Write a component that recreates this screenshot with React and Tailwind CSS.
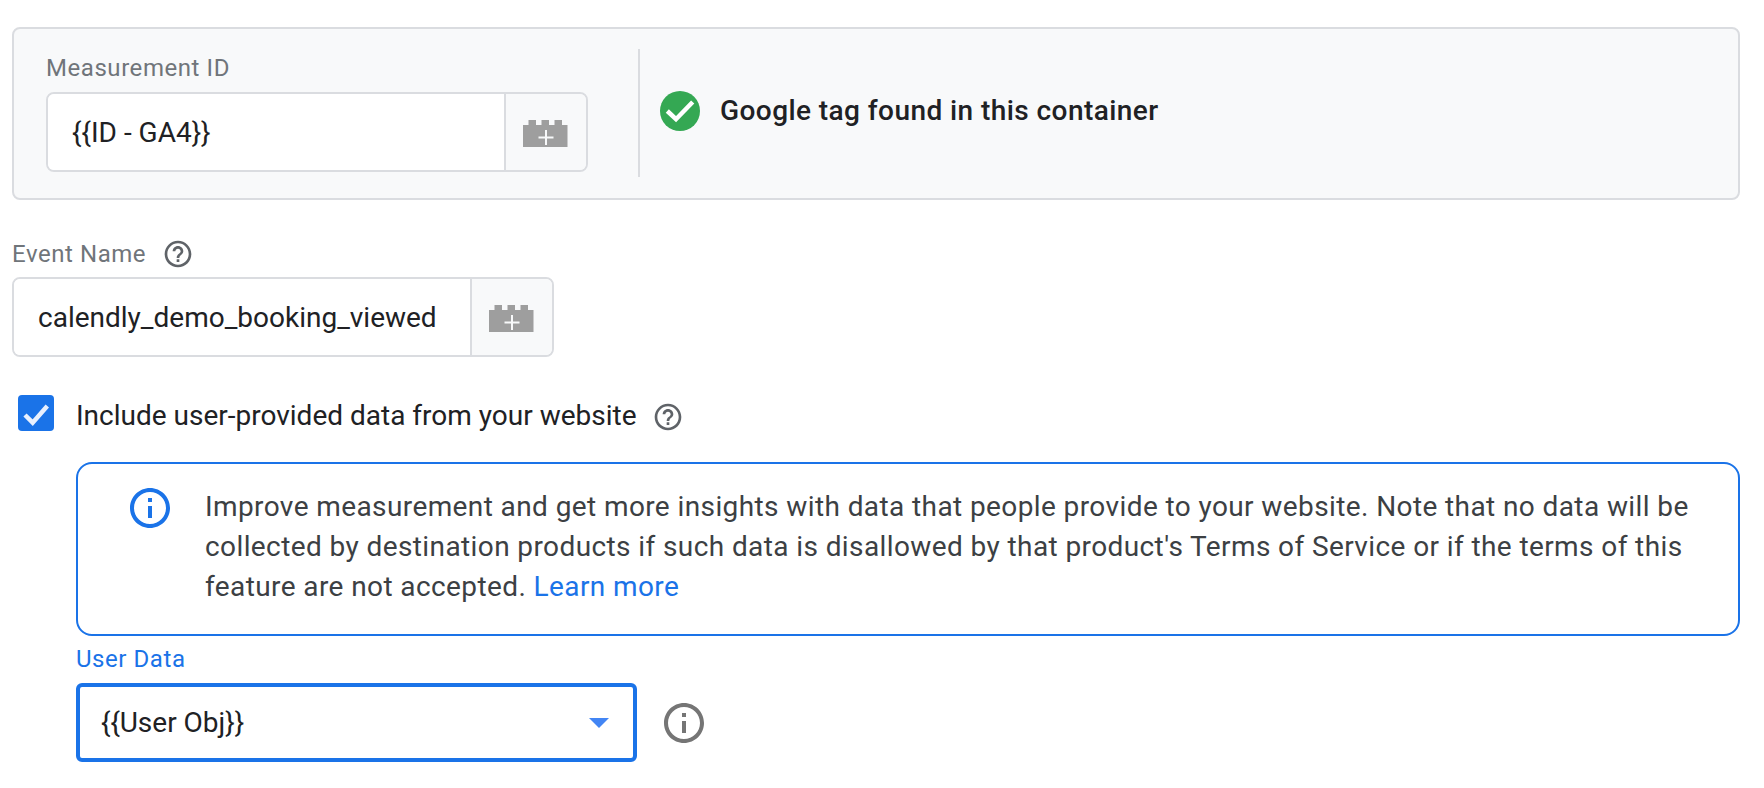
const font = { fontFamily: "Roboto, sans-serif" };

function BrickIcon() {
  return (
    <svg width="46" height="27" viewBox="0 0 46 27" className="mt-[3px] block">
      <path
        fill="#9e9e9e"
        d="M0 5h5.500V0h7.500v5h5.500V0h7.500v5h5.500V0h7.500v5h5.500v22H0z"
      />
      <path stroke="#f8f9fa" strokeWidth="2" d="M23 10v15M15.500 17.500h15" />
    </svg>
  );
}

function HelpIcon({ size = 32 }) {
  return (
    <svg width={size} height={size} viewBox="0 0 24 24" fill="#5f6368" className="block">
      <path d="M11 18h2v-2h-2v2zm1-16C6.480 2 2 6.480 2 12s4.480 10 10 10 10-4.480 10-10S17.520 2 12 2zm0 18c-4.410 0-8-3.590-8-8s3.590-8 8-8 8 3.590 8 8-3.590 8-8 8zm0-14c-2.210 0-4 1.790-4 4h2c0-1.100.9-2 2-2s2 .9 2 2c0 2-3 1.750-3 5h2c0-2.250 3-2.500 3-5 0-2.210-1.790-4-4-4z" />
    </svg>
  );
}

function InfoIcon({ size, color }) {
  return (
    <svg width={size} height={size} viewBox="0 0 24 24" fill={color} className="block">
      <path d="M11 7h2v2h-2zm0 4h2v6h-2zm1-9C6.480 2 2 6.480 2 12s4.480 10 10 10 10-4.480 10-10S17.520 2 12 2zm0 18c-4.410 0-8-3.590-8-8s3.590-8 8-8 8 3.590 8 8-3.590 8-8 8z" />
    </svg>
  );
}

function VariableInput({ value, className = "" }) {
  return (
    <div className={`flex h-[80px] w-[542px] rounded-[8px] border-2 border-[#dadce0] ${className}`}>
      <div className="flex flex-1 items-center rounded-l-[6px] bg-white pl-[24px] pt-[2px] text-[28px] text-[#202124]">
        {value}
      </div>
      <div className="flex w-[82px] items-center justify-center rounded-r-[6px] border-l-2 border-[#dadce0] bg-[#f8f9fa]">
        <BrickIcon />
      </div>
    </div>
  );
}

export default function App() {
  return (
    <div style={font} className="h-[788px] w-[1764px] overflow-hidden bg-white pl-[12px] pr-[24px] pt-[27px]">
      <div className="flex h-[173px] rounded-[8px] border-2 border-[#dadce0] bg-[#f8f9fa] pl-[32px] pt-[20px]">
        <div className="w-[542px] pt-[4px]">
          <div className="mb-[9px] h-[30px] text-[24px] leading-[30px] tracking-[0.56px] text-[#70757a]">Measurement ID</div>
          <VariableInput value="{{ID - GA4}}" />
        </div>
        <div className="ml-[50px] h-[128px] w-[2px] bg-[#dadce0]" />
        <div className="ml-[20px] flex h-[124px] items-center gap-[20px]">
          <svg width="40" height="40" viewBox="0 0 40 40" className="block shrink-0">
            <circle cx="20" cy="20" r="20" fill="#34a853" />
            <path d="M7.300 20l8.700 8.200L32.700 11" fill="none" stroke="#fff" strokeWidth="4.500" />
          </svg>
          <div className="text-[28px] font-medium tracking-[0.43px] text-[#202124]">Google tag found in this container</div>
        </div>
      </div>

      <div className="mt-[39px] flex h-[30px] items-center gap-[16px] text-[24px] tracking-[0.56px] text-[#70757a]">
        Event Name
        <span className="-mt-[1px]"><HelpIcon /></span>
      </div>
      <VariableInput value="calendly_demo_booking_viewed" className="mt-[8px]" />

      <div className="ml-[6px] mt-[38px] flex items-center">
        <svg width="36" height="36" viewBox="0 0 36 36" className="-mt-[6px] block shrink-0">
          <rect width="36" height="36" rx="4" fill="#1a73e8" />
          <path d="M7 20l7.700 7.700L29.300 11" fill="none" stroke="#e8f0fe" strokeWidth="4.500" />
        </svg>
        <span className="ml-[22px] text-[28px] text-[#202124]">Include user-provided data from your website</span>
        <span className="ml-[15px] mt-[2px]"><HelpIcon /></span>
      </div>

      <div className="ml-[64px] mt-[25px]">
        <div className="flex h-[174px] items-start rounded-[16px] border-2 border-[#1a73e8] pl-[48px] pr-[30px] pt-[23px]">
          <div className="-mt-[3px] shrink-0"><InfoIcon size={48} color="#1a73e8" /></div>
          <p className="ml-[31px] text-[28px] leading-[40px] tracking-[0.4px] text-[#3c4043]">
            Improve measurement and get more insights with data that people provide to your website. Note that no data will be collected by destination products if such data is disallowed by that product's Terms of Service or if the terms of this feature are not accepted.{" "}
            <span className="text-[#1a73e8]">Learn more</span>
          </p>
        </div>
        <div className="mt-[8px] h-[30px] text-[24px] leading-[30px] tracking-[0.56px] text-[#1a73e8]">User Data</div>
        <div className="mt-[9px] flex items-center">
          <div className="flex h-[79px] w-[561px] items-center justify-between rounded-[6px] border-[4px] border-[#1a73e8] bg-white pl-[21px] pr-[24px] text-[28px] text-[#202124]">
            {"{{User Obj}}"}
            <div className="h-0 w-0 border-x-[10px] border-t-[10px] border-x-transparent border-t-[#4285f4]" />
          </div>
          <div className="ml-[23px]"><InfoIcon size={48} color="#757575" /></div>
        </div>
      </div>
    </div>
  );
}
